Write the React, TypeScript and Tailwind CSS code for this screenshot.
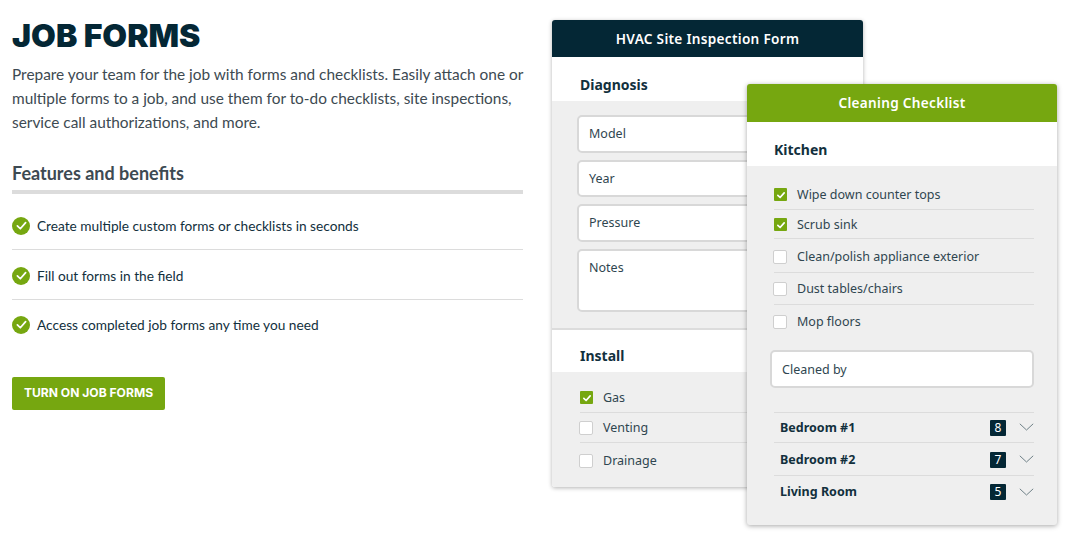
const sans = "font-['Lato','Noto_Sans',sans-serif]"
const card = "font-['Noto_Sans',sans-serif]"

const benefits = [
  { text: 'Create multiple custom forms or checklists in seconds', row: 'h-[50px] pt-[2px] border-b border-[#dcdcdc]' },
  { text: 'Fill out forms in the field', row: 'h-[50px] pt-[2px] border-b border-[#dcdcdc]' },
  { text: 'Access completed job forms any time you need', row: 'h-[50px] pb-[1px]' },
]

function Tick({ size, width }: { size: number; width: number }) {
  return (
    <svg width={size} height={size} viewBox="0 0 12 12" fill="none" stroke="white" strokeWidth={width} strokeLinecap="round" strokeLinejoin="round">
      <path d="M2.2 6.4 L4.9 9 L9.8 3.4" />
    </svg>
  )
}

function CheckBox({ on }: { on?: boolean }) {
  if (on) {
    return (
      <span className="flex h-[13px] w-[13px] shrink-0 items-center justify-center rounded-[1px] bg-[#76a710]">
        <Tick size={10} width={2} />
      </span>
    )
  }
  return <span className="-ml-[1px] h-[14px] w-[14px] shrink-0 rounded-[2px] border border-[#cfcfcf] bg-white" />
}

function CheckRow({ label, on, h, last }: { label: string; on?: boolean; h: string; last?: boolean }) {
  return (
    <div className={`flex items-center gap-[10px] ${h} ${last ? '' : 'border-b border-[#dcdcdc]'}`}>
      <CheckBox on={on} />
      <span className="mt-[1px] text-[12.5px] text-[#2f4650]">{label}</span>
    </div>
  )
}

function Field({ label, h = 'h-[37.5px]', top }: { label: string; h?: string; top?: boolean }) {
  return (
    <div className={`flex ${h} ${top ? 'items-start pt-[8px]' : 'items-center pt-[2px]'} rounded-[5px] border-2 border-[#d8d8d8] bg-white pl-[10px] text-[12.5px] text-[#2f4650]`}>
      {label}
    </div>
  )
}

function Room({ name, count, h, last }: { name: string; count: number; h: string; last?: boolean }) {
  return (
    <div className={`flex items-center ${h} ${last ? '' : 'border-b border-[#dcdcdc]'} pl-[6px]`}>
      <span className="mt-[1px] flex-1 text-[12.5px] font-bold text-[#12303d]">{name}</span>
      <span className="mr-[13px] flex h-4 w-4 items-center justify-center rounded-[1px] bg-[#042735] text-[12px] text-white">{count}</span>
      <svg width="15" height="8" viewBox="0 0 15 8" fill="none" stroke="#6f8087" strokeWidth="1" className="-mt-[1px]">
        <path d="M0.8 0.8 L7.5 7 L14.2 0.8" />
      </svg>
    </div>
  )
}

export default function App() {
  return (
    <div className="flex h-[540px] w-[1076px] overflow-hidden bg-white">
      <div className={`ml-3 w-[511px] shrink-0 pt-[14px] ${sans}`}>
        <h1 className="font-['Inter',sans-serif] text-[32px] leading-[44px] font-black text-[#042735]">JOB FORMS</h1>
        <p className="mt-[4px] text-[15.4px] leading-6 text-[#3d4a52]">
          Prepare your team for the job with forms and checklists. Easily attach one or multiple forms to a job, and use them for to-do checklists, site inspections, service call authorizations, and more.
        </p>
        <h2 className="mt-[27px] border-b-4 border-[#dcdcdc] pb-[5px] text-[18px] leading-[24px] font-bold text-[#3d4a52]">Features and benefits</h2>
        <ul className="mt-[6px]">
          {benefits.map((b) => (
            <li key={b.text} className={`flex items-center gap-[7px] ${b.row}`}>
              <span className="flex h-[18px] w-[18px] items-center justify-center rounded-full bg-[#76a710]">
                <Tick size={13} width={1.6} />
              </span>
              <span className="mt-[1px] text-[13.7px] text-[#12303d]">{b.text}</span>
            </li>
          ))}
        </ul>
        <button className="mt-[27px] flex h-[33px] w-[153px] items-center justify-center rounded-[2px] bg-[#76a710] pb-[1px] font-['Inter',sans-serif] text-[12.1px] font-bold text-white">
          TURN ON JOB FORMS
        </button>
      </div>

      <div className={`relative ml-[29px] mt-5 h-[467px] w-[311px] shrink-0 ${card}`}>
        <div className="flex h-full flex-col overflow-hidden rounded-[3px] bg-white shadow-[0_1px_4px_rgba(0,0,0,0.3)]">
          <div className="flex h-[37px] items-center justify-center bg-[#042735] pt-[1px] text-[13.6px] font-semibold tracking-[0.3px] text-white">HVAC Site Inspection Form</div>
          <div className="flex h-[44px] items-center pt-[12px] pl-[28px] text-[14px] font-bold text-[#12303d] leading-none">Diagnosis</div>
          <div className="flex h-[229px] flex-col gap-[7px] border-b-2 border-[#dcdcdc] bg-[#efefef] pl-[25px] pr-[24px] pt-[14px]">
            <Field label="Model" />
            <Field label="Year" />
            <Field label="Pressure" />
            <Field label="Notes" h="h-[63px]" top />
          </div>
          <div className="flex h-[42px] items-center pt-[10px] pl-[28px] text-[14px] font-bold text-[#12303d] leading-none">Install</div>
          <div className="flex-1 bg-[#efefef] px-[28px] pt-[11px]">
            <CheckRow label="Gas" on h="h-[30px]" />
            <CheckRow label="Venting" h="h-[30px]" />
            <CheckRow label="Drainage" h="h-[34px] pt-[1px]" last />
          </div>
        </div>

        <div className="absolute top-16 left-[195px] flex h-[441px] w-[310px] flex-col overflow-hidden rounded-[3px] bg-[#efefef] shadow-[0_1px_5px_rgba(0,0,0,0.35)]">
          <div className="flex h-[38px] items-center justify-center bg-[#76a710] text-[13.6px] font-semibold tracking-[0.3px] text-white">Cleaning Checklist</div>
          <div className="flex h-[44px] items-center bg-white pt-[12px] pl-[27px] text-[14px] font-bold text-[#12303d] leading-none">Kitchen</div>
          <div className="px-[23px] pt-[14px]">
            <div className="ml-[4px]">
              <CheckRow label="Wipe down counter tops" on h="h-[30px]" />
              <CheckRow label="Scrub sink" on h="h-[29px] pt-[1px]" />
              <CheckRow label="Clean/polish appliance exterior" h="h-[34px] pt-[2px]" />
              <CheckRow label="Dust tables/chairs" h="h-[32px] pt-[1px]" />
              <CheckRow label="Mop floors" h="h-[33px] pt-[1px]" last />
            </div>
            <div className="mt-[12px]">
              <Field label="Cleaned by" h="h-[38px]" />
            </div>
            <div className="mt-[24px] ml-[4px] border-t border-[#dcdcdc]">
              <Room name="Bedroom #1" count={8} h="h-[30px]" />
              <Room name="Bedroom #2" count={7} h="h-[33px] pt-[1px]" />
              <Room name="Living Room" count={5} h="h-[31px] pt-[1px]" last />
            </div>
          </div>
        </div>
      </div>
    </div>
  )
}
